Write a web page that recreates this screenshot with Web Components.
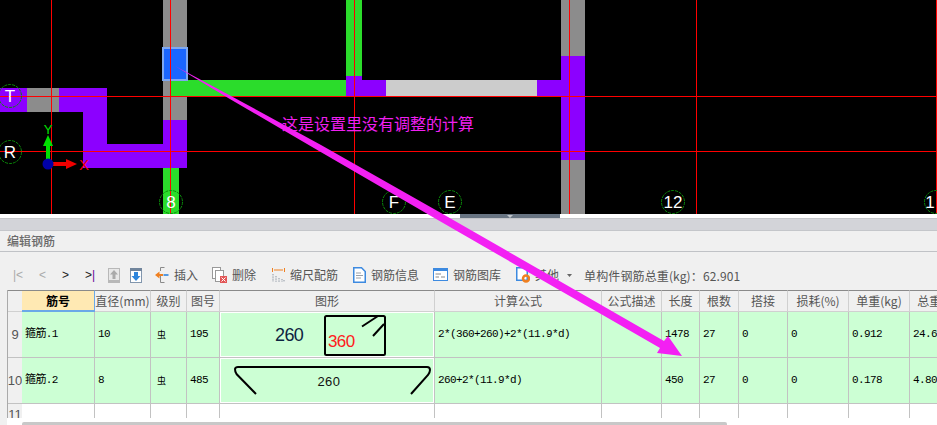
<!DOCTYPE html>
<html lang="zh"><head><meta charset="utf-8"><title>编辑钢筋</title>
<style>
html,body{margin:0;padding:0;width:937px;height:425px;overflow:hidden;background:#fff;font-family:"Noto Sans CJK SC","Liberation Sans",sans-serif}
</style></head><body>
<rebar-app></rebar-app>
<script>
const UI='"Noto Sans CJK SC","Liberation Sans",sans-serif';
const CELL='"Liberation Mono","Noto Sans CJK SC",monospace';
function def(name,html,cls){
  const t=document.createElement('template');t.innerHTML=html;
  customElements.define(name,class extends HTMLElement{
    constructor(){super();this.attachShadow({mode:'open'}).appendChild(t.content.cloneNode(true));}
    connectedCallback(){if(cls)cls.call(this);}
  });
}
const axis=(x,y,l,fs=17,tx=x)=>`<circle cx="${x}" cy="${y}" r="11.5" fill="none" stroke="#0a8a0a" stroke-dasharray="3 1"/><text x="${tx}" y="${y+6}" font-size="${fs}" text-anchor="middle" fill="#fff">${l}</text>`;
const P='#8c00ff',G='#8c8c8c',N='#2bdc2b',R='#ff0000';
const rect=(x,y,w,h,f)=>`<rect x="${x}" y="${y}" width="${w}" height="${h}" fill="${f}"/>`;
def('cad-view',`<style>:host{display:block;height:214px;background:#000;overflow:hidden}svg{display:block}text{font-family:"Liberation Sans",sans-serif}</style>
<svg width="937" height="214" viewBox="0 0 937 214" shape-rendering="crispEdges">
${rect(163,0,24,120,G)}${rect(163,120,24,48,P)}${rect(83,144,104,24,P)}${rect(83,88,24,80,P)}${rect(59,88,48,24,P)}${rect(27,88,32,24,G)}${rect(0,88,27,24,P)}
${rect(163,168,16,46,N)}${rect(171,80,175,16,N)}
${rect(346,0,16,76,N)}${rect(346,76,16,20,P)}${rect(346,80,40,16,P)}${rect(386,80,151,16,'#cccccc')}${rect(537,80,48,16,P)}
${rect(561,0,24,56,G)}${rect(561,56,24,104,P)}${rect(561,160,24,54,G)}
<rect x="163" y="48" width="24" height="32" fill="#1a66ff" stroke="#7fa8f0" stroke-width="2"/>
${rect(0,96,937,1,R)}${rect(0,151,937,1,R)}${rect(51,0,1,214,R)}${rect(170,0,1,214,R)}${rect(354,0,1,214,R)}${rect(569,0,1,214,R)}${rect(696,0,1,214,R)}${rect(936,0,1,214,R)}
<g shape-rendering="auto">
${axis(10,96,'T')}${axis(10,152,'R')}${axis(171,202,'8')}${axis(394,202,'F')}${axis(450,202,'E')}${axis(673,202,'12')}${axis(936,202,'1',17,930)}
<rect x="46" y="145" width="4" height="14" fill="#00e000"/><polygon points="48,135 53,146 43,146" fill="#00e000"/>
<rect x="52" y="162" width="16" height="4" fill="#f00000"/><polygon points="77,164 66,159 66,169" fill="#f00000"/>
<circle cx="48" cy="164" r="5.5" fill="#0000a8"/>
<text x="48" y="134" font-size="13" text-anchor="middle" fill="#00e000">Y</text>
<text x="84" y="170" font-size="15" text-anchor="middle" fill="#f00000">X</text>
</g></svg>`);
def('split-bar',`<style>:host{display:block;height:4px;background:#fff}
.h{width:100px;height:4px;background:#687482;position:relative;margin-left:460px}
.h::after{content:"";position:absolute;left:47px;top:1px;border:3px solid transparent;border-top-color:#bfc4ca;border-bottom:0}</style><div class="h"></div>`);
def('panel-title',`<style>:host{display:block;height:34px;box-sizing:border-box;border-top:1px solid #c4c5c9;background:linear-gradient(#d3d4d9 0 11px,#c4c6ca 11px 12px,#f0f0f0 12px);border-bottom:1px solid #c0c2c6;font:500 12px ${UI};color:#6a6a6a;padding:13px 0 0 7px;line-height:17px}</style><slot></slot>`);
def('tool-btn',`<style>:host{display:inline-flex;align-items:center;gap:5px;font:12px ${UI};color:#555;white-space:nowrap;height:16px;line-height:16px}::slotted(svg){display:block;flex:none}</style><slot name="i"></slot><slot></slot>`);
def('tool-row',`<style>:host{display:flex;align-items:center;height:38px;box-sizing:border-box;padding:8px 0 0 13px;background:#f0f0f0}</style><slot></slot>`);
def('shape-a',`<style>:host{display:block}svg{display:block}</style>
<svg width="213" height="44" viewBox="0 0 213 44"><text x="55" y="29" font-size="18" fill="#0c2440" font-family="Liberation Sans,sans-serif">260</text>
<rect x="105" y="4" width="60" height="39" rx="1.5" fill="none" stroke="#000" stroke-width="2"/>
<path d="M142 14.500 L158 4 M153 24 L164 12" stroke="#000" stroke-width="2" fill="none"/>
<text x="108" y="35" font-size="17" fill="#ff2020" font-family="Liberation Sans,sans-serif">360</text></svg>`);
def('shape-b',`<style>:host{display:block}svg{display:block}</style>
<svg width="213" height="44" viewBox="0 0 213 44"><path d="M36 36 L16.500 16 Q15 14 15 11 Q15.500 9 18 9 L207 9 Q210 9 210 12 Q210 14 208 17 L191 36" fill="none" stroke="#000" stroke-width="2"/>
<text x="109" y="28" font-size="13" letter-spacing="0.5" text-anchor="middle" fill="#111" font-family="Liberation Sans,sans-serif">260</text></svg>`);
const cols=[14,73,56,36,33,215,167,60,38,39,49,61,61,61];
const heads=['','筋号','直径(mm)','级别','图号','图形','计算公式','公式描述','长度','根数','搭接','损耗(%)','单重(kg)','总重(kg)'];
const rows=[['9','箍筋.1','10','虫','195','<shape-a></shape-a>','2*(360+260)+2*(11.9*d)','','1478','27','0','0','0.912','24.624'],
['10','箍筋.2','8','虫','485','<shape-b></shape-b>','260+2*(11.9*d)','','450','27','0','0','0.178','4.806']];
let cells='';
heads.forEach((h,i)=>cells+=`<div class="c h${i==1?' sel':''}${i==0?' rh':''}"><span>${h}</span></div>`);
rows.forEach(r=>r.forEach((v,i)=>{cells+=`<div class="c d${i==0?' rh':''}${i==5?' fig':''}${i==3?' gr':''}"><span>${v}</span></div>`;}));
for(let i=0;i<14;i++)cells+=`<div class="c e${i==0?' rh':''}"><span>${i==0?'11':''}</span></div>`;
def('rebar-grid',`<style>
:host{display:block;width:929px;overflow:hidden}
.g{display:grid;grid-template-columns:${cols.map(c=>c+'px').join(' ')};grid-template-rows:22px 46px 46px 14px;width:943px}
.c{box-sizing:border-box;border-right:1px solid #c2c2c2;border-bottom:1px solid #c2c2c2;background:#fff;overflow:hidden;white-space:nowrap;display:flex;align-items:center}
.h{background:#f0f0f0;border-top:1px solid #8a8a8a;justify-content:center;font:12px/18px ${UI};color:#555;border-right-color:#d0d0d0;border-bottom-color:#d0d0d0}
.sel{background:#ffe9b3;color:#000;font-weight:700;border-right:1px solid #6aa9e8;border-bottom:2px solid #6aa9e8}
.d{background:#ccffd4;font:11px/14px ${CELL};letter-spacing:-.6px;color:#000;padding:0 0 1px 3px}
.fig{padding:0;box-shadow:inset 0 0 0 1px #fff;align-items:flex-start}
.gr{padding-left:6px;font:9px ${UI};letter-spacing:0}
.e{border-bottom:0}
.rh{background:#f0f0f0;font:13px/14px "Liberation Sans",sans-serif;letter-spacing:0;color:#555;justify-content:center;padding:0;border-right:0}
.e.rh{align-items:flex-start;padding-top:4px}
</style><div class="g">${cells}</div>`);
def('scroll-strip',`<style>:host{display:block;height:7px;position:relative}
.t{height:3px;width:705px;margin:0 0 0 22px;position:relative;top:4px;background:#c8c8c8;border-radius:2px 2px 0 0}</style><div class="t"></div>`);
def('note-arrow',`<style>:host{position:absolute;left:0;top:0;width:937px;height:425px;display:block;pointer-events:none}
svg{position:absolute;left:0;top:0}
.n{position:absolute;left:282px;top:112px;font:16px/23px ${UI};color:#f01ff0;white-space:nowrap}</style>
<svg width="937" height="425" viewBox="0 0 937 425"><polygon points="175,66 231,96 321,145 441,213 664,341 668,336 682,356 657,353 660,348 437,219.500 319,151 229,98.500" fill="#f320f3"/></svg><div class="n">这是设置里没有调整的计算</div>`);
const ic=(w,inner)=>`<svg slot="i" width="${w}" height="16" viewBox="0 0 ${w} 16">${inner}</svg>`;
def('rebar-app',`<style>:host{display:block;position:relative;width:937px;height:425px;background:#f0f0f0;overflow:hidden}
.body{display:flex;flex-direction:column;margin-left:7px;border-left:1px solid #aaa}
.nav{display:inline-flex;font:12px/16px "Liberation Sans",sans-serif;color:#555;width:88px;flex:none}
.nav span{display:block}
.lt{color:#aaa}.k{color:#222}
.tb{display:block}
.lbl{display:block;font:12px ${UI};color:#555;white-space:nowrap;letter-spacing:.12px}
tool-btn{margin-left:var(--m,0)}
</style>
<cad-view></cad-view><split-bar></split-bar>
<panel-title>编辑钢筋</panel-title>
<div class="tb"><tool-row>
<span class="nav"><span class="lt" style="width:26px">|&lt;</span><span class="lt" style="width:23px">&lt;</span><span class="k" style="width:23px">&gt;</span><span class="k">&gt;<span style="display:inline;color:#609">|</span></span></span>
<svg width="12" height="15" viewBox="0 0 12 15" style="margin-left:7px;flex:none"><rect x=".5" y=".5" width="11" height="14" fill="#e8e8e8" stroke="#b8b8b8"/><rect x="0" y="12" width="12" height="3" fill="#b8b8b8"/><path d="M6 2 L10 6.500 H7.500 V11 H4.500 V6.500 H2Z" fill="#aaa"/></svg>
<svg width="12" height="15" viewBox="0 0 12 15" style="margin-left:10px;flex:none"><rect x=".5" y=".5" width="11" height="14" fill="#fff" stroke="#8296ad"/><rect x="0" y="0" width="12" height="3" fill="#71859c"/><path d="M6 13 L10.500 8 H8 V4 H4 V8 H1.500Z" fill="#2f86dc"/></svg>
<tool-btn style="--m:13px">${ic(14,'<path d="M9.500 .5H5.500V4M5.500 9V12M5.500 12V15.500H9.500" stroke="#8a8a8a" fill="none"/><path d="M0 8 L4.500 4.500V7H8V9H4.500V11.500Z" fill="#f08020"/><rect x="8.500" y="7" width="5" height="2" fill="#5599e0"/>')}插入</tool-btn>
<tool-btn style="--m:14px">${ic(15,'<rect x=".5" y=".5" width="8" height="11" fill="#fff" stroke="#999"/><rect x="3.500" y="3.500" width="8" height="11" fill="#fff" stroke="#999"/><rect x="8" y="9" width="7" height="7" fill="#e25555"/><path d="M9.500 10.500 L13.500 14.500M13.500 10.500 L9.500 14.500" stroke="#fff"/>')}删除</tool-btn>
<tool-btn style="--m:16px">${ic(13,'<path d="M.5 1V5M12.500 1V5" stroke="#f08020"/><path d="M2 3H11" stroke="#f08020"/><path d="M1 7V15M4 9V15M7 11V15M10 12V15M12 13V15" stroke="#8a94a0" stroke-dasharray="1 .6"/>')}缩尺配筋</tool-btn>
<tool-btn style="--m:15px">${ic(13,'<path d="M.75 .75H8.500L12.250 4.500V15.250H.75Z" fill="#fff" stroke="#3d8ae0" stroke-width="1.500"/><path d="M3 6H8M3 8.500H10M3 11H8" stroke="#9aa0a8"/>')}钢筋信息</tool-btn>
<tool-btn style="--m:14px">${ic(15,'<rect x=".5" y="1.500" width="14" height="12" fill="#fff" stroke="#3d8ae0"/><rect x="0" y="1" width="15" height="3" fill="#3d8ae0"/><path d="M2.500 7H8M2.500 10H6M8 10H12" stroke="#888"/>')}钢筋图库</tool-btn>
<tool-btn style="--m:15px">${ic(14,'<path d="M.75 .75H8.500L11.250 3.500V13.250H.75Z" fill="#fff" stroke="#3d8ae0" stroke-width="1.500"/><circle cx="10" cy="11.500" r="3" fill="none" stroke="#f08020" stroke-width="2.500"/>')}其他</tool-btn>
<svg width="5" height="3" viewBox="0 0 5 3" style="margin-left:8px;flex:none"><path d="M0 0H5L2.500 3Z" fill="#666"/></svg>
<span class="lbl" style="margin-left:12px">单构件钢筋总重(kg)：62.901</span>
</tool-row></div>
<div class="body"><rebar-grid></rebar-grid></div>
<div style="height:7px;background:#fff;border-left:7px solid #f0f0f0;box-sizing:border-box"><scroll-strip style="margin-left:-7px"></scroll-strip></div>
<note-arrow></note-arrow>`);
</script>
</body></html>
